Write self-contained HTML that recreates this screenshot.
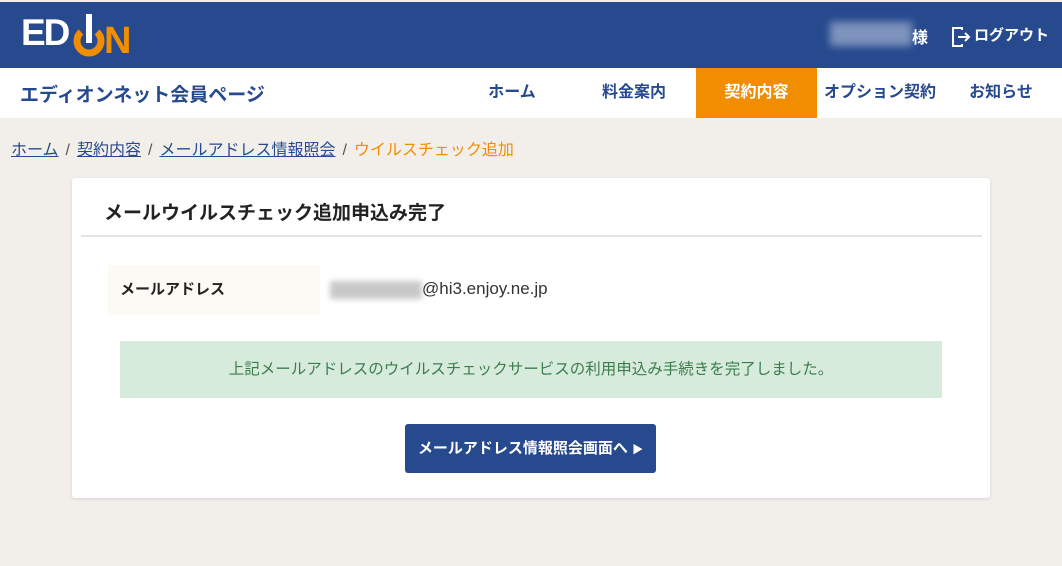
<!DOCTYPE html>
<html><head><meta charset="utf-8"><style>
*{margin:0;padding:0;box-sizing:border-box}
body{width:1062px;height:566px;background:#f2efeb;font-family:"Liberation Sans","Noto Sans CJK JP",sans-serif;position:relative;overflow:hidden}
.top{position:absolute;left:0;top:2px;width:1062px;height:66px;background:#274a8e}
.nav{position:absolute;left:0;top:68px;width:1062px;height:50px;background:#fff}
.nav .t{position:absolute;left:20px;top:12px;font-size:19px;font-weight:bold;color:#274a8e}
.nav .i{position:absolute;top:0;height:50px;line-height:50px;font-size:16px;font-weight:bold;color:#274a8e;text-align:center}
.bc{position:absolute;left:11px;top:136px;font-size:16px;color:#555}
.bc a{color:#274a8e;text-decoration:underline}
.bc i{font-style:normal;margin:0 7px}
.card{position:absolute;left:72px;top:178px;width:918px;height:320px;background:#fff;border-radius:3px;box-shadow:0 1px 3px rgba(0,0,0,.12)}
</style></head><body>
<div class="top">
 <div style="position:absolute;left:21px;top:11px;font-weight:bold;font-size:37px;color:#fff;letter-spacing:-2px;line-height:40px">ED</div>
 <svg style="position:absolute;left:72px;top:10px" width="34" height="45" viewBox="0 0 34 45"><path d="M9 20 A12 12 0 1 0 25 20" fill="none" stroke="#f18d00" stroke-width="7"/><rect x="14" y="2" width="6" height="29" fill="#fff"/></svg>
 <div style="position:absolute;left:104px;top:19px;font-weight:bold;font-size:38px;color:#f18d00;line-height:40px">N</div>
 <div style="position:absolute;left:830px;top:20px;width:82px;height:24px;background:#7e93bd;filter:blur(4px)"></div>
 <div style="position:absolute;left:912px;top:22px;color:#fff;font-weight:bold;font-size:16px">様</div>
 <svg style="position:absolute;left:951px;top:24px" width="20" height="22" viewBox="0 0 20 22"><path d="M11 4V2H2v18h9v-2" fill="none" stroke="#fff" stroke-width="2"/><path d="M7 11h11M14 7l4 4-4 4" fill="none" stroke="#fff" stroke-width="2"/></svg>
 <div style="position:absolute;left:974px;top:22px;color:#fff;font-weight:bold;font-size:15px">ログアウト</div>
</div>
<div class="nav">
 <div class="t">エディオンネット会員ページ</div>
 <div class="i" style="left:464px;width:96px">ホーム</div>
 <div class="i" style="left:586px;width:96px">料金案内</div>
 <div class="i" style="left:696px;width:121px;background:#f18d00;color:#fff">契約内容</div>
 <div class="i" style="left:820px;width:120px">オプション契約</div>
 <div class="i" style="left:960px;width:82px">お知らせ</div>
</div>
<div class="bc"><a>ホーム</a><i>/</i><a>契約内容</a><i>/</i><a>メールアドレス情報照会</a><i>/</i><span style="color:#f18d00">ウイルスチェック追加</span></div>
<div class="card">
 <div style="position:absolute;left:32px;top:20px;font-size:19px;font-weight:bold;color:#222">メールウイルスチェック追加申込み完了</div>
 <div style="position:absolute;left:9px;top:57px;width:901px;height:2px;background:#e3e3e3"></div>
 <div style="position:absolute;left:36px;top:87px;width:212px;height:49px;background:#fdf9f4;font-size:15px;font-weight:bold;line-height:49px;padding-left:12px;color:#222">メールアドレス</div>
 <div style="position:absolute;left:258px;top:103px;width:92px;height:18px;background:#c8c8c8;filter:blur(3px)"></div>
 <div style="position:absolute;left:350px;top:101px;font-size:17px;color:#333">@hi3.enjoy.ne.jp</div>
 <div style="position:absolute;left:48px;top:163px;width:822px;height:57px;background:#d6ebdb;color:#3c7d4e;font-size:15.5px;text-align:center;line-height:57px">上記メールアドレスのウイルスチェックサービスの利用申込み手続きを完了しました。</div>
 <div style="position:absolute;left:333px;top:246px;width:251px;height:49px;background:#274a8e;border-radius:3px;color:#fff;font-size:15px;font-weight:bold;line-height:49px;text-align:center">メールアドレス情報照会画面へ <span style="font-size:11px">▶</span></div>
</div>
</body></html>
